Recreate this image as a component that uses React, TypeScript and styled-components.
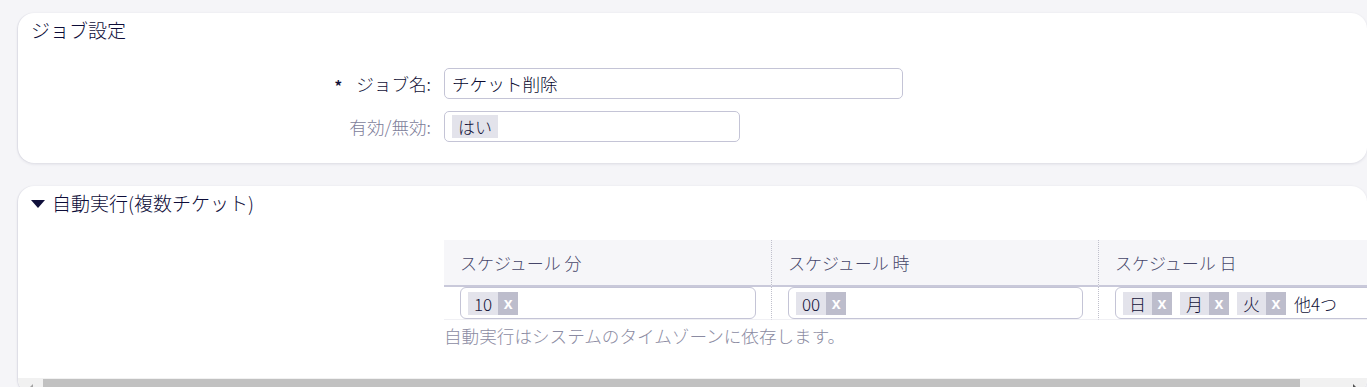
import React from "react";
import styled, { createGlobalStyle } from "styled-components";

const Global = createGlobalStyle`
  html, body { margin: 0; padding: 0; overflow: hidden; background: #f5f5f8; }
  body { font-family: "Noto Sans CJK JP", "Noto Sans", sans-serif; color: #0f0f38; font-weight: 300; }
  * { box-sizing: border-box; }
`;

const Page = styled.div`
  display: flex;
  flex-direction: column;
  gap: 23px;
  padding: 13px 0 0 18px;
  width: 100vw;
`;

const Card = styled.section`
  background: #fff;
  border-radius: 16px;
  box-shadow: 0 1px 3px rgba(40, 40, 80, 0.12), -1px 0 1px rgba(40, 40, 80, 0.06);
  overflow: hidden;
  display: flex;
  flex-direction: column;
`;

const Title = styled.h2`
  margin: 0;
  padding: 3px 0 0 13px;
  height: 31px;
  font-size: 19px;
  font-weight: 300;
  line-height: 28px;
  color: #0c0c38;
  display: flex;
  align-items: center;
  gap: 7px;
`;

const Form = styled.div`
  display: grid;
  grid-template-columns: 413px 1fr;
  grid-auto-rows: 31px;
  column-gap: 13px;
  row-gap: 12px;
  align-items: center;
  padding: 24px 0 21px;
`;

const Label = styled.label<{ $muted?: boolean }>`
  height: 31px;
  display: flex;
  align-items: center;
  justify-content: flex-end;
  font-size: 17.6px;
  color: ${(p) => (p.$muted ? "#7c7c98" : "#121238")};
`;

const Star = styled.span`
  font-size: 15px;
  font-weight: 700;
  margin: 4px 14px 0 0;
  color: #121238;
`;

const Field = styled.div<{ $w: number }>`
  width: ${(p) => p.$w}px;
  height: 31px;
  border: 1px solid #c4c4d6;
  border-radius: 5px;
  display: flex;
  align-items: center;
  padding: 0 7px;
  gap: 8px;
  font-size: 17.6px;
  font-weight: 300;
  color: #0a0a30;
  background: #fff;
`;

const Chip = styled.span`
  display: inline-flex;
  align-items: stretch;
  height: 23px;
  background: #e3e3eb;
  font-size: 17px;
  line-height: 23px;
  font-weight: 300;
  color: #121238;
`;

const ChipText = styled.span`
  padding: 0 6px;
`;

const ChipX = styled.span`
  width: 20px;
  background: #bdbdcc;
  color: #fff;
  font-family: "Liberation Sans", Arial, sans-serif;
  font-weight: 700;
  font-size: 16px;
  display: flex;
  align-items: center;
  justify-content: center;
`;

const More = styled.span`
  font-size: 17px;
  font-weight: 300;
  color: #121238;
`;

const Viewport = styled.div`
  height: 192px;
  overflow: hidden;
`;

const Section = styled.div`
  width: 1425px;
`;

const Triangle = styled.span`
  width: 0;
  height: 0;
  border-left: 7px solid transparent;
  border-right: 7px solid transparent;
  border-top: 8px solid #0f0f3a;
  margin-top: 1px;
`;

const Body = styled.div`
  padding: 23px 0 0 426px;
`;

const Table = styled.div`
  display: grid;
  grid-template-columns: repeat(3, 327px);
`;

const Th = styled.div<{ $first?: boolean }>`
  background: #f6f6f9;
  height: 47px;
  border-bottom: 2px solid #c9c9da;
  border-left: ${(p) => (p.$first ? "none" : "1px dotted #c0c0cc")};
  padding: 0 16px;
  display: flex;
  align-items: center;
  font-size: 17px;
  color: #46466a;
`;

const Td = styled.div<{ $first?: boolean }>`
  height: 33px;
  border-left: ${(p) => (p.$first ? "none" : "1px dotted #c0c0cc")};
  border-bottom: 1px solid #f0f0f4;
  padding: 0 15px 0 16px;
`;

const CellField = styled.div`
  height: 32px;
  border: 1px solid #c4c4d6;
  border-radius: 6px;
  display: flex;
  align-items: center;
  padding: 0 7px;
  gap: 8px;
`;

const Note = styled.p`
  margin: 3px 0 0;
  font-size: 17.6px;
  line-height: 26px;
  color: #8b8ba2;
`;

const ScrollBar = styled.div`
  height: 17px;
  background: #f1f1f1;
  display: flex;
  align-items: stretch;
`;

const ScrollButton = styled.div<{ $dir: "left" | "right" }>`
  width: 25px;
  flex: none;
  display: flex;
  align-items: center;
  justify-content: center;
  padding-top: 2px;
  &::before {
    content: "";
    width: 0;
    height: 0;
    border-top: 4px solid transparent;
    border-bottom: 4px solid transparent;
    ${(p) =>
      p.$dir === "left"
        ? "border-right: 4px solid #a3a3a3;"
        : "border-left: 4px solid #505050;"}
  }
`;

const Track = styled.div`
  flex: 1;
  padding-top: 1px;
`;

const Thumb = styled.div`
  height: 100%;
  background: #c1c1c1;
`;

const cols = [
  { head: "スケジュール 分", chips: ["10"] },
  { head: "スケジュール 時", chips: ["00"] },
  { head: "スケジュール 日", chips: ["日", "月", "火"], more: "他4つ" },
];

const ChipItem = ({ text }: { text: string }) => (
  <Chip>
    <ChipText>{text}</ChipText>
    <ChipX>x</ChipX>
  </Chip>
);

export default function App() {
  return (
    <>
      <Global />
      <Page>
        <Card>
          <Title>ジョブ設定</Title>
          <Form>
            <Label>
              <Star>*</Star>ジョブ名:
            </Label>
            <Field $w={459}>チケット削除</Field>
            <Label $muted>有効/無効:</Label>
            <Field $w={296}>
              <Chip>
                <ChipText>はい</ChipText>
              </Chip>
            </Field>
          </Form>
        </Card>
        <Card>
          <Viewport>
            <Section>
              <Title>
                <Triangle />
                自動実行(複数チケット)
              </Title>
              <Body>
                <Table>
                  {cols.map((c, i) => (
                    <Th key={c.head} $first={i === 0}>
                      {c.head}
                    </Th>
                  ))}
                  {cols.map((c, i) => (
                    <Td key={c.head} $first={i === 0}>
                      <CellField>
                        {c.chips.map((t) => (
                          <ChipItem key={t} text={t} />
                        ))}
                        {c.more && <More>{c.more}</More>}
                      </CellField>
                    </Td>
                  ))}
                </Table>
                <Note>自動実行はシステムのタイムゾーンに依存します。</Note>
              </Body>
            </Section>
          </Viewport>
          <ScrollBar>
            <ScrollButton $dir="left" />
            <Track>
              <Thumb style={{ width: "1257px" }} />
            </Track>
            <ScrollButton $dir="right" />
          </ScrollBar>
        </Card>
      </Page>
    </>
  );
}
